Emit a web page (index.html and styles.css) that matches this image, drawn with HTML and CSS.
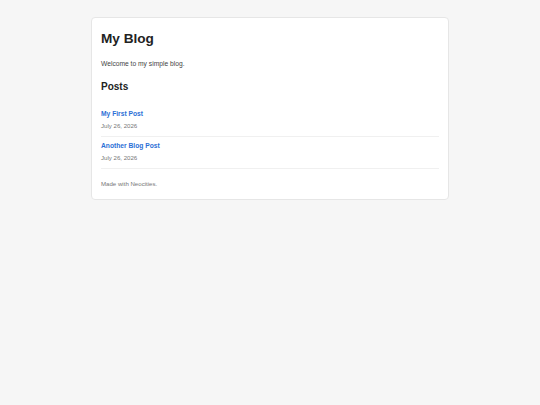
FILE: index.html
```html
<!DOCTYPE html>
<html lang="en">
<head>
<meta charset="utf-8">
<title>My Blog</title>
<link rel="stylesheet" href="styles.css">
</head>
<body>
<main class="card">
  <h1 class="title">My Blog</h1>
  <p class="intro">Welcome to my simple blog.</p>
  <h2 class="section">Posts</h2>
  <ul class="posts">
    <li class="post">
      <a class="post-link" href="#">My First Post</a>
      <div class="post-date">July 26, 2026</div>
    </li>
    <li class="post">
      <a class="post-link" href="#">Another Blog Post</a>
      <div class="post-date">July 26, 2026</div>
    </li>
  </ul>
  <footer class="footer">Made with Neocities.</footer>
</main>
</body>
</html>
```
FILE: styles.css
```css
html, body {
  margin: 0;
  padding: 0;
}
body {
  background: #f6f6f6;
  font-family: "Liberation Sans", Arial, sans-serif;
  color: #333;
  padding-top: 17px;
}
.card {
  width: 338px;
  margin: 0 auto;
  background: #fff;
  border: 1px solid #e6e6e6;
  border-radius: 4px;
  padding: 10px 9px 11px;
}
.title {
  margin: 3px 0 0;
  font-size: 13.6px;
  line-height: 16px;
  font-weight: bold;
  color: #222;
}
.intro {
  margin: 12px 0 0;
  font-size: 6.7px;
  line-height: 10px;
  color: #444;
}
.section {
  margin: 12px 0 0;
  font-size: 10px;
  line-height: 12px;
  font-weight: bold;
  color: #222;
}
.posts {
  list-style: none;
  margin: 12px 0 0;
  padding: 0;
}
.post {
  padding: 5px 0 6px;
  border-bottom: 1px solid #f0f0f0;
}
.post-link {
  display: block;
  font-size: 6.7px;
  line-height: 8px;
  font-weight: bold;
  color: #2b6fd6;
  text-decoration: none;
}
.post-date {
  margin-top: 4px;
  font-size: 6.1px;
  line-height: 8px;
  color: #777;
}
.footer {
  margin-top: 11px;
  font-size: 6.1px;
  line-height: 8px;
  color: #777;
}
```
